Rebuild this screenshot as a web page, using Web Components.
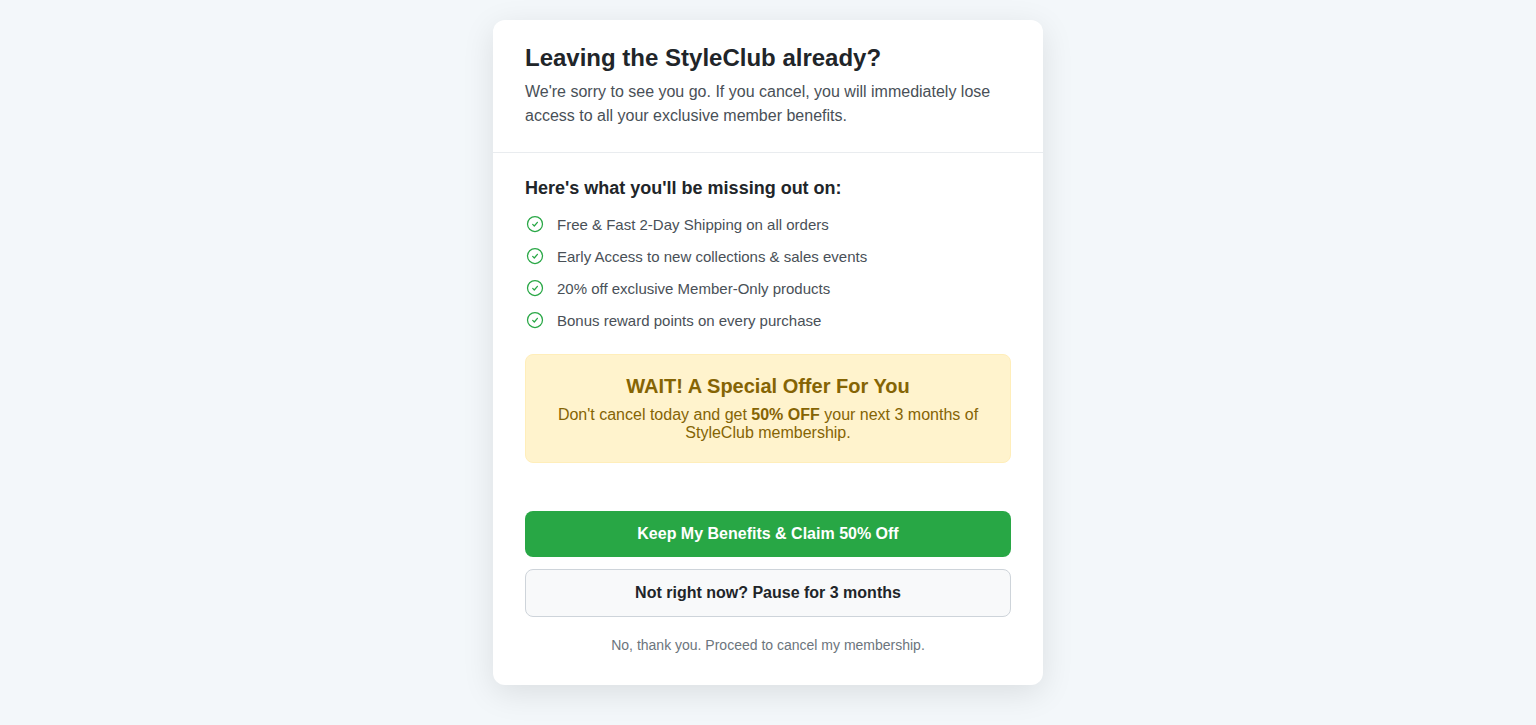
<!DOCTYPE html>
<html lang="en"><head><meta charset="utf-8"><title>StyleClub</title>
<style>body{margin:0;min-height:725px;box-sizing:border-box;padding:20px;background:#f3f7fa;display:flex;justify-content:center;align-items:flex-start;font-family:"Liberation Sans",Arial,sans-serif;color:#212529}</style></head><body>
<retention-card>
<card-header slot="header"><span slot="title">Leaving the StyleClub already?</span>We're sorry to see you go. If you cancel, you will immediately lose access to all your exclusive member benefits.</card-header>
<benefit-list><span slot="title">Here's what you'll be missing out on:</span>
<benefit-item>Free &amp; Fast 2-Day Shipping on all orders</benefit-item>
<benefit-item>Early Access to new collections &amp; sales events</benefit-item>
<benefit-item>20% off exclusive Member-Only products</benefit-item>
<benefit-item>Bonus reward points on every purchase</benefit-item></benefit-list>
<special-offer><span slot="title">WAIT! A Special Offer For You</span>Don't cancel today and get <strong>50% OFF</strong> your next 3 months of StyleClub membership.</special-offer>
<action-button slot="actions" kind="primary">Keep My Benefits &amp; Claim 50% Off</action-button>
<action-button slot="actions" kind="secondary">Not right now? Pause for 3 months</action-button>
<action-button slot="actions" kind="link">No, thank you. Proceed to cancel my membership.</action-button>
</retention-card>
<script>
const define=(name,html)=>customElements.define(name,class extends HTMLElement{constructor(){super();this.attachShadow({mode:'open'}).innerHTML=html}});
define('retention-card',`<style>:host{display:block;width:550px;height:665px;background:#fff;border-radius:12px;box-shadow:0 8px 32px rgba(0,0,0,.1);overflow:hidden}main{padding:24px 32px}footer{padding:24px 32px 32px;display:flex;flex-direction:column;gap:12px}</style><slot name="header"></slot><main><slot></slot></main><footer><slot name="actions"></slot></footer>`);
define('card-header',`<style>:host{display:block;padding:24px 32px;border-bottom:1px solid #e9ecef}h1{margin:0 0 8px;font-size:24px;line-height:28px}p{margin:0;font-size:16px;line-height:24px;color:#495057}</style><h1><slot name="title"></slot></h1><p><slot></slot></p>`);
define('benefit-list',`<style>:host{display:block}h2{margin:0 0 14px;font-size:18px;line-height:23px}div{display:flex;flex-direction:column;gap:12px}</style><h2><slot name="title"></slot></h2><div><slot></slot></div>`);
define('benefit-item',`<style>:host{display:flex;align-items:center;gap:12px;height:20px;font-size:15px;color:#495057}svg{flex:none}</style><svg width="20" height="20" viewBox="0 0 20 20" fill="none" stroke="#28a745" stroke-width="1.25" stroke-linecap="round" stroke-linejoin="round"><circle cx="10" cy="10" r="7.5"/><path d="m7.7 10.4 1.6 1.6 3.1-3.7"/></svg><span><slot></slot></span>`);
define('special-offer',`<style>:host{display:block;margin-top:24px;padding:20px;border:1px solid #ffeeba;border-radius:8px;background:#fff3cd;color:#856404;text-align:center}h2{margin:0 0 8px;font-size:20px;line-height:23px}p{margin:0;font-size:16px;line-height:18px}</style><h2><slot name="title"></slot></h2><p><slot></slot></p>`);
define('action-button',`<style>:host{display:block}button{display:block;width:100%;margin:0;padding:14px;border:0;border-radius:8px;font:bold 16px/18px "Liberation Sans",Arial,sans-serif;cursor:pointer}:host([kind=primary]) button{background:#28a745;color:#fff}:host([kind=secondary]) button{background:#f8f9fa;color:#212529;border:1px solid #ced4da}:host([kind=link]) button{background:none;color:#6c757d;font-size:14px;font-weight:400;line-height:16px;padding:8px}</style><button><slot></slot></button>`);
</script></body></html>
